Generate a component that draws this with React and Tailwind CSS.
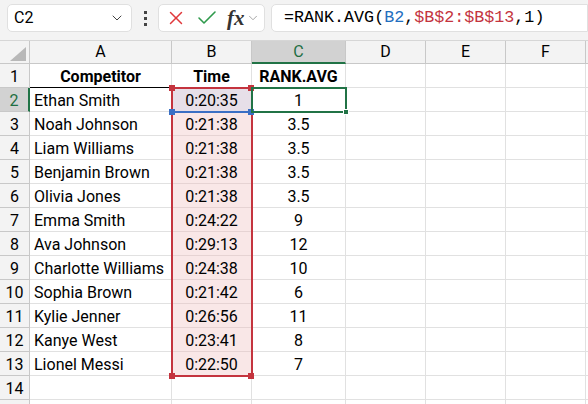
import { ChevronDown, X, Check } from 'lucide-react';

const rows = [
  ['Ethan Smith', '0:20:35', '1'],
  ['Noah Johnson', '0:21:38', '3.5'],
  ['Liam Williams', '0:21:38', '3.5'],
  ['Benjamin Brown', '0:21:38', '3.5'],
  ['Olivia Jones', '0:21:38', '3.5'],
  ['Emma Smith', '0:24:22', '9'],
  ['Ava Johnson', '0:29:13', '12'],
  ['Charlotte Williams', '0:24:38', '10'],
  ['Sophia Brown', '0:21:42', '6'],
  ['Kylie Jenner', '0:26:56', '11'],
  ['Kanye West', '0:23:41', '8'],
  ['Lionel Messi', '0:22:50', '7'],
];

const cols = ['A', 'B', 'C', 'D', 'E', 'F'];
const grid = 'grid grid-cols-[30px_142px_80px_94px_80px_80px_80px_20px]';
const cell = 'h-[24px] border-r border-b border-[#e1e1e1] text-[16px] pt-[2px] leading-[21px] truncate';

function RowHead({ n, active }) {
  return (
    <div
      className={
        active
          ? 'h-[24px] border-b border-[#c8c8c8] border-r-2 border-r-[#217346] bg-[#d2d2d2] text-[#1e6e42] text-[16px] pt-[2px] leading-[21px] text-center'
          : 'h-[24px] border-r border-b border-[#c8c8c8] bg-[#f3f3f3] text-[16px] pt-[2px] leading-[21px] text-center'
      }
    >
      {n}
    </div>
  );
}

function Sq({ className }) {
  return <div className={`absolute w-[6px] h-[6px] ${className}`} />;
}

function EmptyCells() {
  return (
    <>
      <div className={cell} />
      <div className={cell} />
      <div className={cell} />
      <div className={cell} />
    </>
  );
}

export default function App() {
  return (
    <div className="w-[588px] h-[404px] overflow-hidden bg-white text-black" style={{ fontFamily: '"Liberation Sans Narrow", Roboto, "Liberation Sans", sans-serif' }}>
      {/* formula bar */}
      <div className="h-[41px] bg-[#f3f3f3] flex items-start pt-[4px] pl-[7px] gap-[6px] border-b border-[#d6d6d6]">
        <div className="w-[125px] h-[28px] bg-white border border-[#e0e0e0] rounded-[5px] flex items-center pl-[6px] pr-[6px] justify-between">
          <span className="text-[16px]" style={{ fontFamily: 'Roboto, "Liberation Sans", sans-serif' }}>C2</span>
          <ChevronDown size={16} strokeWidth={1.5} className="text-[#444]" />
        </div>
        <div className="w-[14px] h-[28px] flex flex-col items-center justify-center gap-[3px]">
          <div className="w-[3px] h-[3px] bg-[#444]" />
          <div className="w-[3px] h-[3px] bg-[#444]" />
          <div className="w-[3px] h-[3px] bg-[#444]" />
        </div>
        <div className="w-[107px] h-[28px] bg-white border border-[#e0e0e0] rounded-[5px] flex items-center pl-[6px] gap-[8px]">
          <X size={22} strokeWidth={1.6} className="text-[#e0383b]" />
          <Check size={24} strokeWidth={1.6} className="text-[#2f9a4c]" />
          <span className="text-[21px] italic font-bold text-[#333] leading-none" style={{ fontFamily: '"Liberation Serif", serif' }}>
            fx
          </span>
          <ChevronDown size={14} strokeWidth={1.5} className="text-[#999] -ml-[7px]" />
        </div>
        <div className="flex-1 h-[28px] bg-white border border-[#e0e0e0] rounded-l-[5px] flex items-center pl-[12px] text-[16.7px] whitespace-nowrap" style={{ fontFamily: '"Liberation Mono", monospace' }}>
          =RANK.AVG(<span className="text-[#1f6fc0]">B2</span>,<span className="text-[#c4343e]">$B$2:$B$13</span>,1)
        </div>
      </div>

      {/* sheet */}
      <div className="relative">
        <div className={grid}>
          <div className="h-[23px] border-r border-b border-[#c8c8c8] bg-[#f3f3f3] relative">
            <div className="absolute right-[3px] bottom-[2px] w-0 h-0 border-l-[16px] border-l-transparent border-b-[14px] border-b-[#b8b8b8]" />
          </div>
          {cols.map((c) => (
            <div
              key={c}
              className={
                c === 'C'
                  ? 'h-[23px] bg-[#d2d2d2] border-r border-[#c8c8c8] border-b-2 border-b-[#217346] text-[#1e6e42] text-[16px] leading-[22px] text-center'
                  : 'h-[23px] bg-[#f3f3f3] border-r border-b border-[#c8c8c8] text-[16px] leading-[22px] text-center'
              }
            >
              {c}
            </div>
          ))}
          <div className="h-[23px] bg-[#f3f3f3] border-b border-[#c8c8c8]" />

          {/* header row */}
          <RowHead n={1} />
          <div className={`${cell} text-center font-bold border-b-black`}>Competitor</div>
          <div className={`${cell} text-center font-bold`}>Time</div>
          <div className={`${cell} text-center font-bold`}>RANK.AVG</div>
          <EmptyCells />

          {rows.map(([name, time, rank], i) => (
            <div key={name} className="contents">
              <RowHead n={i + 2} active={i === 0} />
              <div className={`${cell} pl-[4px]`}>{name}</div>
              <div className={`${cell} text-center ${i === 0 ? 'bg-[#e7dfe8]' : 'bg-[#f9e7e7] border-[#e6d3d3]'}`}>{time}</div>
              <div className={`${cell} text-center`}>{rank}</div>
              <EmptyCells />
            </div>
          ))}

          <RowHead n={14} />
          <div className={cell} />
          <div className={cell} />
          <div className={cell} />
          <EmptyCells />

          <div className="h-[24px] border-r border-[#c8c8c8] bg-[#f3f3f3]" />
          <div className={cell} />
          <div className={cell} />
          <div className={cell} />
          <EmptyCells />
        </div>

        {/* reference range B2:B13 */}
        <div className="absolute left-[171px] top-[46px] w-[82px] h-[290px] border-2 border-[#c4343e] pointer-events-none" />
        <Sq className="left-[169px] top-[44px] bg-[#c4343e]" />
        <Sq className="left-[248px] top-[44px] bg-[#c4343e]" />
        <Sq className="left-[169px] top-[332px] bg-[#c4343e]" />
        <Sq className="left-[248px] top-[332px] bg-[#c4343e]" />
        {/* B2 reference */}
        <div className="absolute left-[173px] top-[70px] w-[78px] h-[2px] bg-[#3a6fc4]" />
        <Sq className="left-[169px] top-[68px] bg-[#3a6fc4]" />
        <Sq className="left-[248px] top-[68px] bg-[#3a6fc4]" />

        {/* active cell C2 */}
        <div className="absolute left-[251px] top-[46px] w-[96px] h-[26px] border-2 border-[#217346]" />
        <Sq className="left-[343px] top-[68px] bg-[#217346] border border-white" />
      </div>
    </div>
  );
}
